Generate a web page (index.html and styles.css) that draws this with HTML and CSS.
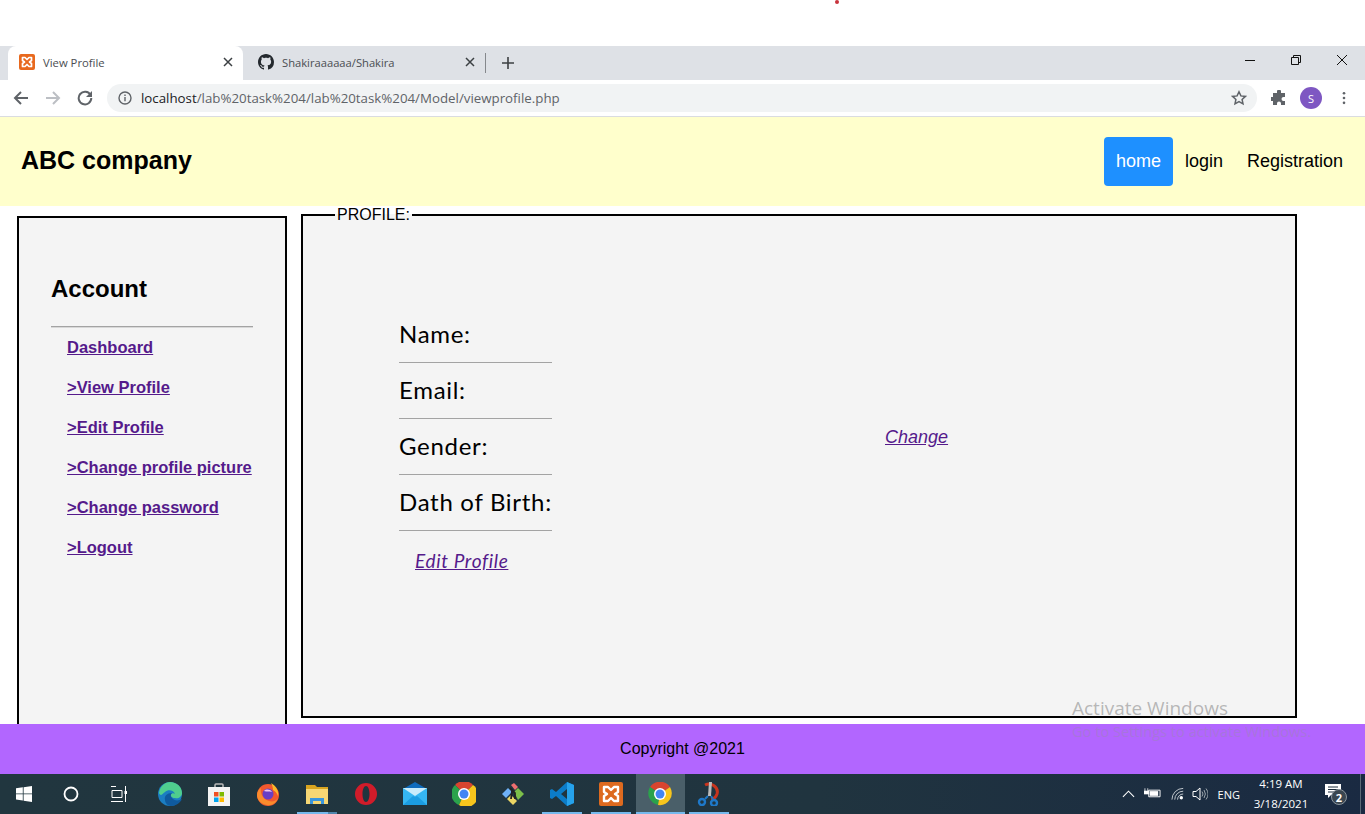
FILE: index.html
```html
<!DOCTYPE html>
<html lang="en">
<head>
<meta charset="utf-8">
<title>View Profile</title>
<link rel="stylesheet" href="styles.css">
</head>
<body>
<div class="screen">
  <div class="top-gap"><span class="red-dot"></span></div>

  <div class="tabstrip">
    <div class="tab tab-active">
      <svg class="favicon" viewBox="0 0 16 16"><rect width="16" height="16" rx="2" fill="#e8691e"/><path d="M3.500 3.500h2.500l2 2 2-2h2.500v3l-2 1.500 2 1.500v3h-2.500l-2-2-2 2h-2.500v-3l2-1.500-2-1.500z" fill="none" stroke="#fff" stroke-width="1.700" stroke-linejoin="round"/></svg>
      <span class="tab-title">View Profile</span>
      <svg class="tab-x" viewBox="0 0 10 10"><path d="M1 1l8 8M9 1l-8 8" stroke="#3c4043" stroke-width="1.500"/></svg>
    </div>
    <div class="tab">
      <svg class="favicon" viewBox="0 0 16 16"><path fill="#24292e" d="M8 0C3.580 0 0 3.580 0 8c0 3.540 2.290 6.530 5.470 7.590.4.070.55-.17.550-.38 0-.19-.01-.82-.01-1.490-2.010.37-2.530-.49-2.690-.94-.09-.23-.48-.94-.82-1.130-.28-.15-.68-.52-.01-.53.63-.01 1.080.58 1.230.82.720 1.210 1.870.87 2.330.66.070-.52.280-.87.510-1.070-1.780-.2-3.640-.89-3.640-3.950 0-.87.310-1.590.820-2.150-.08-.2-.36-1.020.08-2.120 0 0 .67-.21 2.200.82.640-.18 1.320-.27 2-.27s1.360.09 2 .27c1.530-1.040 2.200-.82 2.200-.82.440 1.100.160 1.920.08 2.120.51.560.820 1.270.820 2.150 0 3.070-1.870 3.750-3.650 3.950.290.250.540.730.540 1.480 0 1.070-.01 1.930-.01 2.200 0 .21.150.46.550.38A8.010 8.010 0 0 0 16 8c0-4.420-3.580-8-8-8z"/></svg>
      <span class="tab-title">Shakiraaaaaa/Shakira</span>
      <svg class="tab-x" viewBox="0 0 10 10"><path d="M1 1l8 8M9 1l-8 8" stroke="#3c4043" stroke-width="1.500"/></svg>
    </div>
    <span class="tab-sep"></span>
    <svg class="new-tab" viewBox="0 0 12 12"><path d="M6 0v12M0 6h12" stroke="#3c4043" stroke-width="1.600"/></svg>
    <div class="win-controls">
      <svg class="win-btn" viewBox="0 0 12 12"><path d="M1 6.500h10" stroke="#111" stroke-width="1"/></svg>
      <svg class="win-btn" viewBox="0 0 12 12"><path d="M1.500 3.500h7v7h-7zM3.500 3.500v-2h7v7h-2" fill="none" stroke="#111" stroke-width="1"/></svg>
      <svg class="win-btn" viewBox="0 0 12 12"><path d="M1 1l10 10M11 1L1 11" stroke="#111" stroke-width="1"/></svg>
    </div>
  </div>

  <div class="toolbar">
    <svg class="nav-ico" viewBox="0 0 16 16"><path d="M15 8H2M8 2L2 8l6 6" fill="none" stroke="#5f6368" stroke-width="2"/></svg>
    <svg class="nav-ico" viewBox="0 0 16 16"><path d="M1 8h13M8 2l6 6-6 6" fill="none" stroke="#bcbfc4" stroke-width="2"/></svg>
    <svg class="nav-ico nav-last" viewBox="0 0 16 16"><path d="M13.500 5A6.300 6.300 0 1 0 14.300 8" fill="none" stroke="#5f6368" stroke-width="2"/><path d="M15 1v6H9z" fill="#5f6368"/></svg>
    <div class="omnibox">
      <svg class="info-ico" viewBox="0 0 14 14"><circle cx="7" cy="7" r="6" fill="none" stroke="#5f6368" stroke-width="1.400"/><path d="M7 6v4.200M7 3.500v1.400" stroke="#5f6368" stroke-width="1.400"/></svg>
      <span class="url"><span class="url-host">localhost</span>/lab%20task%204/lab%20task%204/Model/viewprofile.php</span>
      <svg class="star-ico" viewBox="0 0 16 16"><path d="M8 1.800l1.900 4.100 4.500.5-3.300 3 .9 4.500L8 11.700l-4 2.200.9-4.500-3.300-3 4.500-.5z" fill="none" stroke="#5f6368" stroke-width="1.500"/></svg>
    </div>
    <svg class="puzzle-ico" viewBox="0 0 16 16"><path fill="#5f6368" d="M6 1.500a2 2 0 0 1 4 0V3h4v4h-1.500a2 2 0 0 0 0 4H14v4h-4v-1.500a2 2 0 0 0-4 0V15H2v-4H.8a2 2 0 0 1 0-4H2V3h4z"/></svg>
    <span class="avatar">S</span>
    <svg class="menu-ico" viewBox="0 0 4 16"><circle cx="2" cy="2.500" r="1.500" fill="#5f6368"/><circle cx="2" cy="8" r="1.500" fill="#5f6368"/><circle cx="2" cy="13.500" r="1.500" fill="#5f6368"/></svg>
  </div>

  <header class="site-header">
    <h1 class="brand">ABC company</h1>
    <nav class="site-nav">
      <a class="nav-link nav-link-active" href="#">home</a>
      <a class="nav-link" href="#">login</a>
      <a class="nav-link" href="#">Registration</a>
    </nav>
  </header>

  <main class="content">
    <aside class="sidebar">
      <h2 class="side-title">Account</h2>
      <hr class="side-rule">
      <ul class="side-links">
        <li><a href="#">Dashboard</a></li>
        <li><a href="#">&gt;View Profile</a></li>
        <li><a href="#">&gt;Edit Profile</a></li>
        <li><a href="#">&gt;Change profile picture</a></li>
        <li><a href="#">&gt;Change password</a></li>
        <li><a href="#">&gt;Logout</a></li>
      </ul>
    </aside>
    <fieldset class="profile">
      <legend class="profile-legend">PROFILE:</legend>
      <div class="profile-body">
        <div class="fields">
          <div class="field">Name:</div>
          <div class="field">Email:</div>
          <div class="field">Gender:</div>
          <div class="field">Dath of Birth:</div>
          <a class="edit-link" href="#">Edit Profile</a>
        </div>
        <a class="change-link" href="#">Change</a>
      </div>
    </fieldset>
  </main>

  <footer class="site-footer">Copyright @2021</footer>

  <div class="taskbar">
    <div class="task-item task-sys">
      <svg class="ico-start" viewBox="0 0 16 16"><path fill="#fff" d="M0 2.300l6.800-1v6.200H0zM7.600 1.200L16 0v7.500H7.600zM0 8.300h6.800v6.300l-6.800-1zM7.600 8.300H16V16l-8.400-1.200z"/></svg>
    </div>
    <div class="task-item task-sys">
      <svg class="ico-mid" viewBox="0 0 16 16"><circle cx="8" cy="8" r="6.500" fill="none" stroke="#fff" stroke-width="1.800"/></svg>
    </div>
    <div class="task-item task-sys task-sys-last">
      <svg class="ico-mid" viewBox="0 0 16 16"><path d="M0 .5h5M0 15.500h12M1 4.500h10v7H1zM14.500 0v16" fill="none" stroke="#fff" stroke-width="1"/><path d="M13.500 5h2.500v3h-2.500z" fill="#fff"/></svg>
    </div>
    <div class="task-item">
      <svg class="ico-app" viewBox="0 0 24 24"><circle cx="12" cy="12" r="12" fill="#1b7ec2"/><path d="M1 11C2 4 7 0 12 0c7 0 12 5 12 11 0 4-4 6-7 5-3 0-5-2-4-4 1-1 3-1 4 0-1-4-7-5-10-2-3 2-4 5-6 1z" fill="#4fce8e"/><path d="M13 24c5 0 9-3 11-7-3 2-8 2-10-1-2-2-1-4 0-5-5 0-8 3-7 7 0 3 3 6 6 6z" fill="#0f5a9e"/></svg>
    </div>
    <div class="task-item">
      <svg class="ico-app" viewBox="0 0 24 24"><path d="M8 6V3a1 1 0 0 1 1-1h6a1 1 0 0 1 1 1v3" fill="none" stroke="#bbb" stroke-width="1.500"/><rect x="1" y="5" width="22" height="19" fill="#f3f3f3"/><rect x="7" y="10" width="4.500" height="4.500" fill="#f25022"/><rect x="12.500" y="10" width="4.500" height="4.500" fill="#7fba00"/><rect x="7" y="15.500" width="4.500" height="4.500" fill="#00a4ef"/><rect x="12.500" y="15.500" width="4.500" height="4.500" fill="#ffb900"/></svg>
    </div>
    <div class="task-item">
      <svg class="ico-app" viewBox="0 0 24 24"><circle cx="12" cy="13" r="11" fill="#f2582e"/><path d="M15 1c5 3 8 8 7 13-1-3-3-5-5-6 0-3-1-5-2-7z" fill="#fcb92a"/><path d="M1 13c0-3 2-6 4-7-1 4 1 11 8 13 4 1 7 0 9-3-2 5-6 8-11 7-6-1-10-5-10-10z" fill="#fb8c2c"/><circle cx="12" cy="12" r="5.500" fill="#6a3fc4"/><path d="M8 9c2-2 6-2 8 1-3-1-5 0-8-1z" fill="#f0c6ec"/></svg>
    </div>
    <div class="task-item task-open task-stacked">
      <svg class="ico-app" viewBox="0 0 24 24"><path d="M1 3h9l2 2h11v5H1z" fill="#d9a520"/><rect x="1" y="7" width="22" height="15" fill="#f7d774"/><path d="M5 22v-6h14v6h-3v-3H8v3z" fill="#3a96dd"/></svg>
    </div>
    <div class="task-item">
      <svg class="ico-app" viewBox="0 0 24 24"><path fill-rule="evenodd" d="M12 1a11 11 0 1 0 0 22 11 11 0 0 0 0-22zm0 3c2 0 3.500 3.500 3.500 8s-1.500 8-3.500 8-3.500-3.500-3.500-8 1.500-8 3.500-8z" fill="#d11c2a"/></svg>
    </div>
    <div class="task-item">
      <svg class="ico-app" viewBox="0 0 24 24"><path d="M0 7L12 0l12 7z" fill="#0f6cbd"/><rect y="6" width="24" height="17" fill="#35b6f2"/><path d="M0 6l12 8 12-8z" fill="#c9ecfb"/><path d="M0 23l10-9 2 1 2-1 10 9z" fill="#1b9de2"/></svg>
    </div>
    <div class="task-item">
      <svg class="ico-app" viewBox="0 0 24 24"><path d="M12 12L3 3a12 12 0 0 1 18 0z" fill="#d9442f"/><path d="M12 12L3 3a12 12 0 0 0 4 20z" fill="#2ba24c"/><path d="M12 12L21 3a12 12 0 0 1-14 20z" fill="#f7c51c"/><circle cx="12" cy="12" r="6" fill="#fff"/><circle cx="12" cy="12" r="4.500" fill="#4285f4"/></svg>
    </div>
    <div class="task-item">
      <svg class="ico-app" viewBox="0 0 24 24"><path d="M10 3l3-2 4 4-3 3z" fill="#ef6f6f"/><path d="M1 12l6-6 4 4-6 6z" fill="#6fb1f7"/><path d="M13 10l4-4 6 6-6 6z" fill="#7cbf4a"/><path d="M6 17l4-4 6 6-4 4z" fill="#ecd664"/><path d="M9 6l5 5v6M11 9l-1 8" fill="none" stroke="#222" stroke-width="1.800"/></svg>
    </div>
    <div class="task-item task-open">
      <svg class="ico-app" viewBox="0 0 24 24"><path d="M17 0l7 3v18l-7 3-11-10-4 3-2-1V8l2-1 4 3zM17 7l-6 5 6 5z" fill="#0c7cc8"/><path d="M17 0l7 3v18l-7 3z" fill="#26a2eb"/></svg>
    </div>
    <div class="task-item task-open">
      <svg class="ico-app" viewBox="0 0 24 24"><rect width="24" height="24" rx="2" fill="#dd6a1f"/><path d="M5 5h4l3 3 3-3h4v5l-3 2 3 2v5h-4l-3-3-3 3H5v-5l3-2-3-2z" fill="none" stroke="#fff" stroke-width="2.400" stroke-linejoin="round"/></svg>
    </div>
    <div class="task-item task-open task-active">
      <svg class="ico-app" viewBox="0 0 24 24"><path d="M12 12L2 5a12 12 0 0 1 20 0z" fill="#d9442f"/><path d="M12 12L2 5a12 12 0 0 0 8 18z" fill="#2ba24c"/><path d="M12 12L22 5a12 12 0 0 1-12 18z" fill="#f7c51c"/><circle cx="12" cy="12" r="6" fill="#fff"/><circle cx="12" cy="12" r="4.500" fill="#4285f4"/></svg>
    </div>
    <div class="task-item task-open">
      <svg class="ico-app" viewBox="0 0 24 24"><path d="M8 3c6-3 14 2 12 9-1 3-3 5-6 5" fill="none" stroke="#c9341d" stroke-width="3"/><path d="M12 0h3l-1 14h-3z" fill="#bcbcbc"/><path d="M11 14L8 17M14 14l2 3" stroke="#1e78c8" stroke-width="2"/><circle cx="5" cy="20" r="3" fill="none" stroke="#1e78c8" stroke-width="2.400"/><circle cx="17" cy="21" r="3" fill="none" stroke="#1e78c8" stroke-width="2.400"/></svg>
    </div>

    <div class="tray">
      <svg class="tray-ico" viewBox="0 0 14 8"><path d="M1 7l6-6 6 6" fill="none" stroke="#fff" stroke-width="1.200"/></svg>
      <svg class="tray-ico tray-batt" viewBox="0 0 18 12"><path d="M1 1v3M4 1v3M0 4h5v3H0z" stroke="#fff" fill="#fff" stroke-width=".8"/><path d="M5 3h12v7H5z" fill="none" stroke="#fff"/><path d="M6 4h9v5H6z" fill="#fff"/></svg>
      <svg class="tray-ico tray-wifi" viewBox="0 0 16 14"><path d="M1 13A12 12 0 0 1 13 1M4 13a9 9 0 0 1 9-9M7 13a6 6 0 0 1 6-6" fill="none" stroke="#c9ced3"/><circle cx="11" cy="11" r="1.800" fill="#fff"/></svg>
      <svg class="tray-ico tray-vol" viewBox="0 0 16 14"><path d="M1 4.500h3L8 1v12L4 9.500H1z" fill="none" stroke="#fff"/><path d="M10 4.500a4 4 0 0 1 0 5M12 3a7 7 0 0 1 0 8M14 1.500a9 9 0 0 1 0 11" fill="none" stroke="#9aa4ab"/></svg>
      <span class="tray-lang">ENG</span>
      <div class="tray-clock"><span>4:19 AM</span><span>3/18/2021</span></div>
      <div class="tray-notify">
        <svg class="tray-note" viewBox="0 0 16 14"><path d="M0 0h16v11H6l-3 3v-3H0z" fill="#fff"/><path d="M3 3h10M3 5.500h10M3 8h7" stroke="#1c2c3c"/></svg>
        <span class="note-badge">2</span>
      </div>
      <span class="show-desktop"></span>
    </div>
  </div>

  <div class="watermark">
    <div class="wm-title">Activate Windows</div>
    <div class="wm-sub">Go to Settings to activate Windows.</div>
  </div>
</div>
</body>
</html>
```

FILE: styles.css
```css
* { box-sizing: border-box; }
html, body { margin: 0; padding: 0; height: 100%; overflow: hidden; background: #fff; }
.screen {
  position: relative;
  width: 1365px;
  height: 814px;
  display: flex;
  flex-direction: column;
  overflow: hidden;
  font-family: "Liberation Sans", Arial, sans-serif;
}
.top-gap { height: 46px; position: relative; flex: none; }
.red-dot {
  position: absolute; left: 835px; top: 0; width: 4px; height: 4px;
  border-radius: 50%; background: #c8323c;
}

/* browser chrome */
.tabstrip {
  height: 34px; flex: none; background: #dee1e6;
  display: flex; align-items: stretch; padding-left: 8px;
}
.tab {
  width: 238px; display: flex; align-items: center;
  padding: 0 10px 2px 11px; gap: 8px;
  font-family: "Open Sans", sans-serif; font-size: 11.300px; color: #4a4d52;
}
.tab-active { width: 235px; background: #fff; border-radius: 8px 8px 0 0; color: #4a4d52; }
.tab-active + .tab { padding-left: 15px; width: 242px; font-size: 11.200px; }
.favicon { width: 16px; height: 16px; flex: none; }
.tab-title { flex: 1; white-space: nowrap; }
.tab-x { width: 10px; height: 10px; flex: none; }
.tab-sep { width: 1px; height: 20px; background: #85888c; align-self: center; }
.new-tab { width: 12px; height: 12px; align-self: center; margin-left: 16px; }
.win-controls {
  margin-left: auto; display: flex; gap: 34px; padding: 8px 17px 0 0; align-items: flex-start;
}
.win-btn { width: 12px; height: 12px; }

.toolbar {
  height: 37px; flex: none; background: #fff; border-bottom: 1px solid #dadce0;
  display: flex; align-items: center; padding-left: 13px;
}
.nav-ico { width: 16px; height: 16px; margin-right: 16px; flex: none; }
.nav-last { margin-right: 14px; }
.omnibox {
  width: 1150px; height: 28px; margin-right: 14px; background: #f1f3f4; border-radius: 14px;
  display: flex; align-items: center; padding: 0 10px 0 11px; flex: none;
}
.info-ico { width: 14px; height: 14px; flex: none; margin-right: 9px; }
.url { font-family: "Open Sans", sans-serif; font-size: 13.300px; color: #5f6368; flex: 1; white-space: nowrap; }
.url-host { color: #202124; }
.star-ico { width: 16px; height: 16px; flex: none; }
.puzzle-ico { width: 16px; height: 16px; flex: none; margin-right: 13px; }
.avatar {
  width: 22px; height: 22px; border-radius: 50%; background: #7e57c2; color: #fff; flex: none;
  font-family: "Open Sans", sans-serif; font-size: 11px; display: flex; align-items: center; justify-content: center;
}
.menu-ico { width: 4px; height: 14px; margin-left: 20px; flex: none; }

/* page */
.site-header {
  height: 89px; flex: none; background: #ffffcc;
  display: flex; align-items: center; justify-content: space-between; padding: 0 10px 0 21px;
}
.brand { margin: 0 0 2px; font-size: 25px; font-weight: 700; color: #000; }
.site-nav { display: flex; align-items: center; }
.nav-link {
  color: #000; text-decoration: none; font-size: 18px; padding: 14px 12px; line-height: 21px; border-radius: 4px;
}
.nav-link-active { background: #1e90ff; color: #fff; }

.content { flex: 1; min-height: 0; position: relative; display: flex; align-items: flex-start; overflow: hidden; padding: 0 0 0 17px; }
.sidebar {
  width: 270px; height: 600px; flex: none; margin-top: 10px;
  background: #f4f4f4; border: 2px solid #000; padding: 56px 32px 0 32px;
}
.side-title { margin: 0; font-size: 24px; line-height: 29px; font-weight: 700; color: #000; }
.side-rule { margin: 23px 0 0; border: 0; border-top: 1px solid #a3a3a3; border-bottom: 1px solid #d8d8d8; height: 2px; }
.side-links { list-style: none; margin: 0; padding: 9px 0 0 16px; }
.side-links li { height: 40px; line-height: 20px; white-space: nowrap; }
.side-links a { color: #551a8b; font-weight: 700; font-size: 16.500px; }

.profile {
  width: 996px; height: 512px; flex: none; margin: 0 0 0 14px; padding: 0;
  min-width: 0; background: #f4f4f4; border: 2px solid #000;
}
.profile-legend { margin-left: 32px; padding: 0 2px; font-size: 16px; line-height: 18px; color: #000; }
.profile-body { display: flex; align-items: flex-start; padding: 83px 0 0 96px; position: relative; }
.fields { width: 153px; flex: none; }
.field {
  height: 56px; padding-top: 11px; line-height: 32px; border-bottom: 1px solid #a3a3a3;
  font-family: "Lato", sans-serif; font-size: 24px; color: #000; white-space: nowrap; letter-spacing: .7px;
}
.edit-link {
  display: block; margin: 19px 0 0 16px; white-space: nowrap;
  font-family: "Lato", sans-serif; font-style: italic; font-size: 19px; line-height: 22px; color: #551a8b; letter-spacing: .65px;
}
.change-link {
  margin: 119px 0 0 333px; font-style: italic; font-size: 18px; line-height: 22px; color: #551a8b;
}

.site-footer {
  height: 50px; flex: none; background: #b266ff; color: #000;
  display: flex; align-items: center; justify-content: center; font-size: 16px;
}

/* taskbar */
.taskbar {
  height: 40px; flex: none; display: flex; align-items: stretch;
  background: linear-gradient(90deg, #21363f 0%, #20343f 60%, #1a2a42 100%);
}
.task-item { width: 49px; display: flex; align-items: center; justify-content: center; flex: none; position: relative; }
.task-sys { width: 47.500px; }
.task-sys-last { margin-right: 3px; }
.task-open::after {
  content: ""; position: absolute; bottom: 0; left: 4.500px; right: 4.500px; height: 2px; background: #76b9ed;
}
.task-stacked::after { background: linear-gradient(90deg, #76b9ed 77%, #4f86ad 77%); }
.task-active { background: #4a5f69; }
.task-active::after { left: 0; right: 0; }
.ico-start { width: 16px; height: 16px; }
.ico-mid { width: 16px; height: 16px; }
.ico-app { width: 24px; height: 24px; }
.tray { margin-left: auto; display: flex; align-items: center; color: #fff; font-family: "Open Sans", sans-serif; }
.tray-ico { flex: none; }
.tray-ico:first-child { width: 13px; height: 8px; margin-right: 9px; }
.tray-batt { width: 17px; height: 12px; margin-right: 10px; margin-top: -3px; }
.tray-wifi { width: 15px; height: 14px; margin-right: 6px; }
.tray-vol { width: 16px; height: 14px; margin-right: 10px; }
.tray-lang { font-size: 11px; margin-right: 15px; }
.tray-clock { display: flex; flex-direction: column; align-items: center; width: 52px; font-size: 11.500px; line-height: 20px; white-space: nowrap; margin-right: 16px; }
.tray-notify { position: relative; width: 26px; height: 30px; margin-right: 11px; }
.tray-note { position: absolute; left: 2px; top: 5px; width: 16px; height: 14px; }
.note-badge {
  position: absolute; left: 8px; top: 10px; width: 16px; height: 16px; border-radius: 50%;
  background: #3a4650; border: 1px solid #8a949c; font-size: 11px; font-weight: 700;
  display: flex; align-items: center; justify-content: center;
}
.show-desktop { width: 1px; height: 100%; background: #5a6a78; margin-right: 4px; align-self: stretch; }

.watermark {
  position: absolute; left: 1072px; top: 696px; pointer-events: none;
  font-family: "Open Sans", sans-serif; color: rgba(130,130,130,.55);
}
.wm-title { font-size: 19px; line-height: 25px; white-space: nowrap; }
.wm-sub { font-size: 14.600px; line-height: 20px; white-space: nowrap; color: rgba(150,140,165,.4); }
```
